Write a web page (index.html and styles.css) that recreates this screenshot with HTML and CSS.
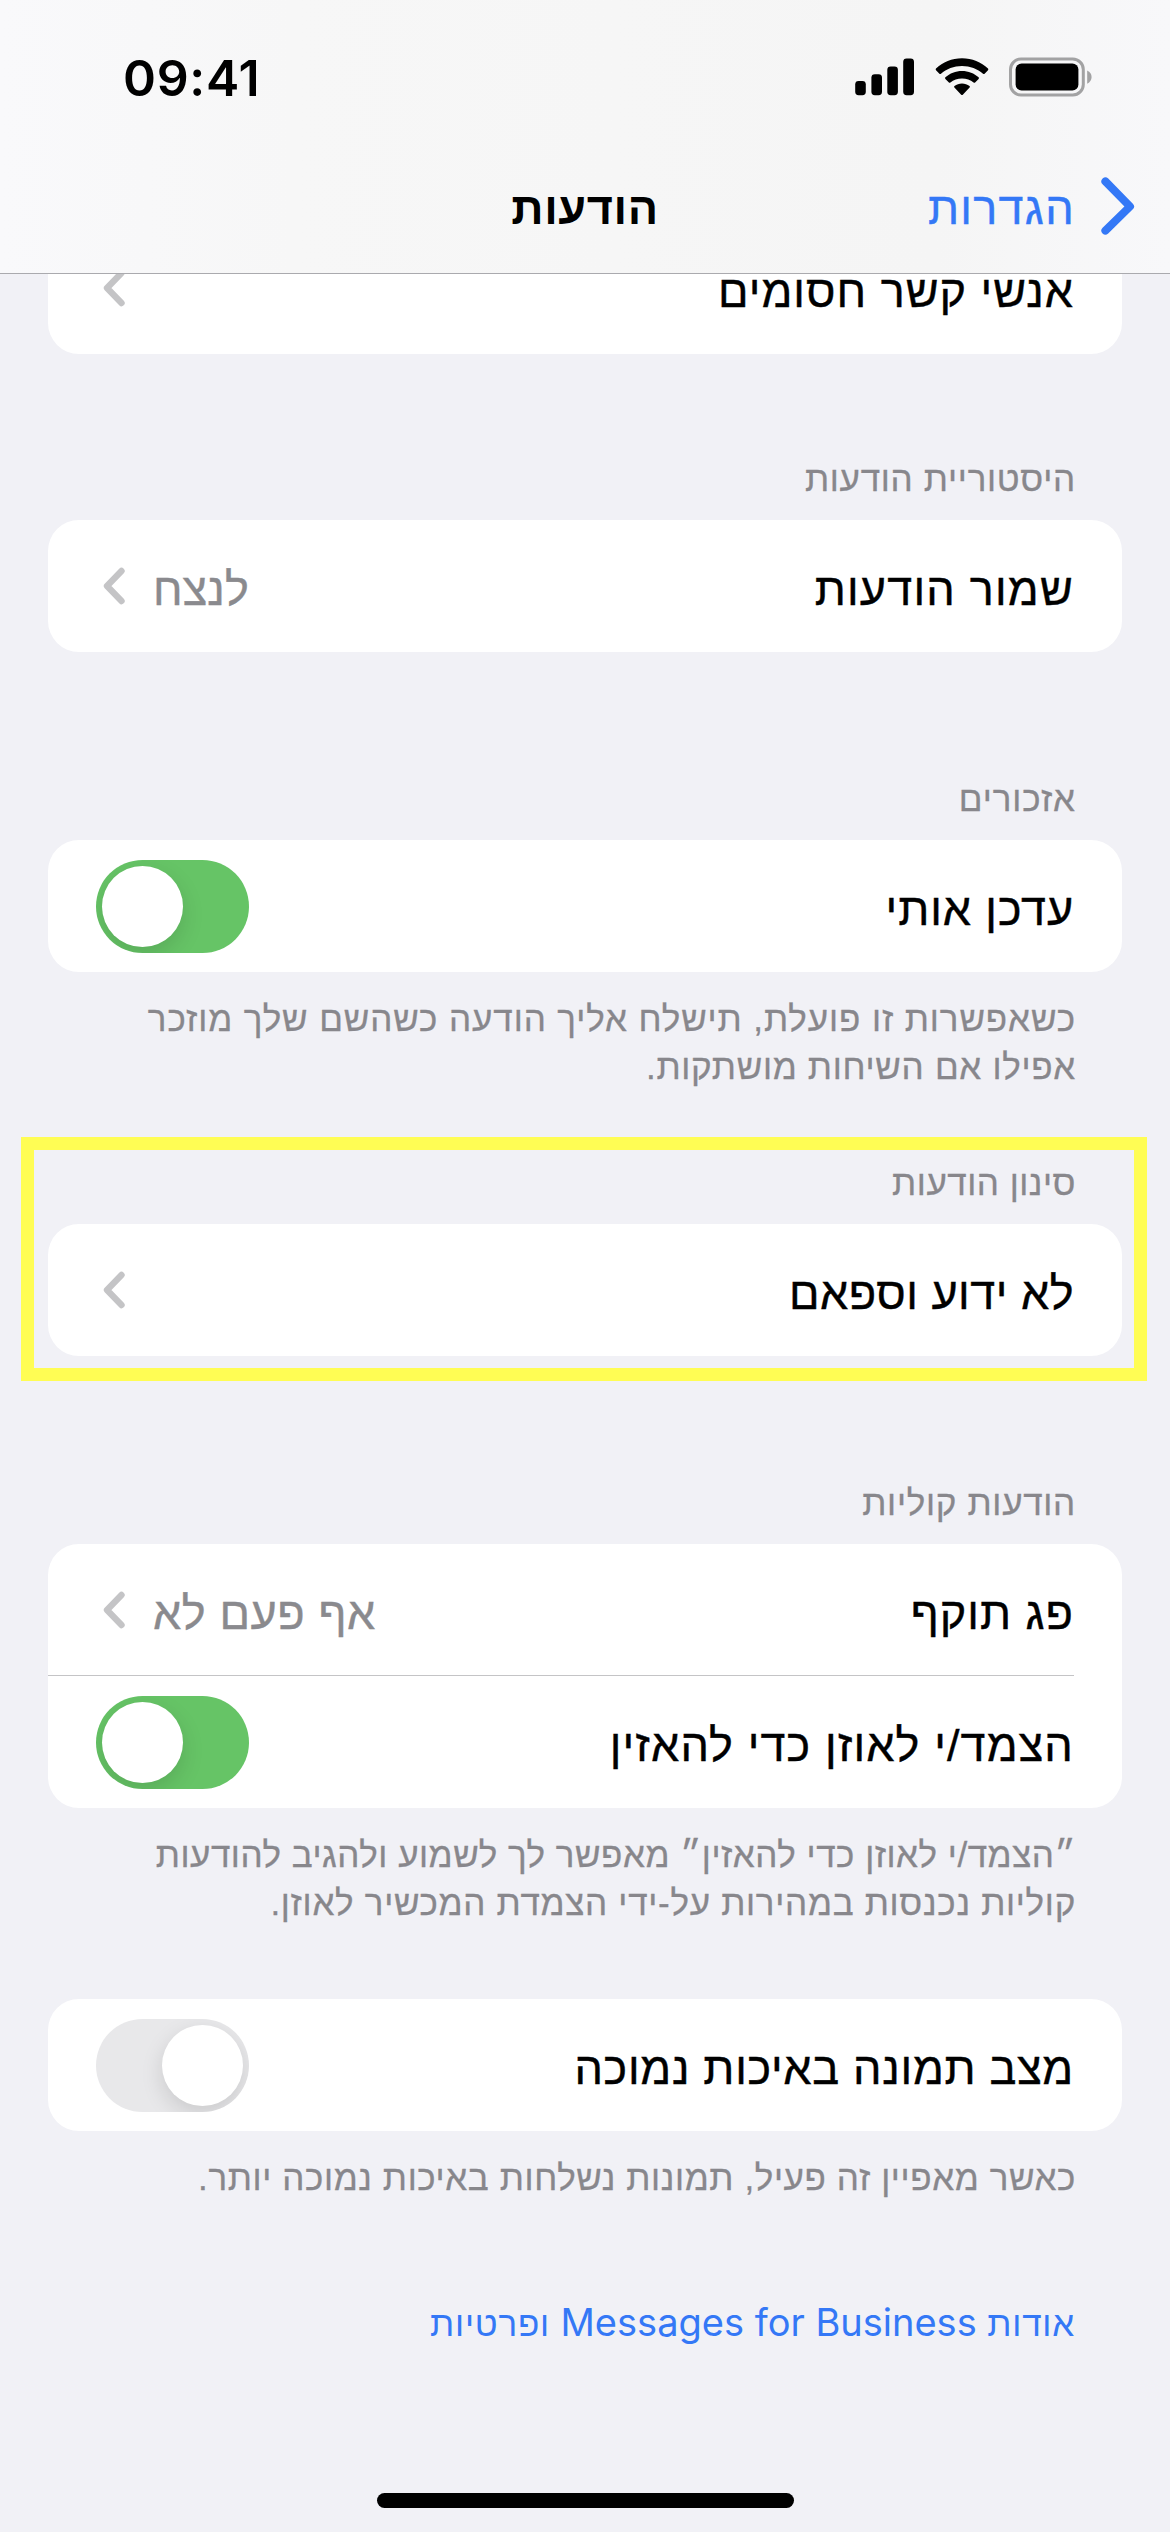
FILE: index.html
```html
<!DOCTYPE html>
<html lang="he" dir="rtl">
<head>
<meta charset="utf-8">
<title>הודעות</title>
<link rel="stylesheet" href="styles.css">
</head>
<body>
<div class="screen">
  <header class="header">
    <div class="status" dir="ltr">
      <span class="time">09:41</span>
      <span class="indicators">
        <svg class="signal" width="60" height="38" viewBox="0 0 60 38"><rect x="0.2" y="23" width="10.6" height="14.2" rx="3.4"/><rect x="16.4" y="16.2" width="10.6" height="21" rx="3.4"/><rect x="32.3" y="8.4" width="10.6" height="28.8" rx="3.4"/><rect x="48.2" y="0.6" width="10.8" height="36.6" rx="3.4"/></svg>
        <svg class="wifi" width="54" height="38" viewBox="0 0 54 38"><path d="M27 0.2C16.900 0.200 7.800 4.200 1 10.600Q0.300 11.400 1 12.200L4.400 15.700Q5.200 16.400 6 15.700C11.500 10.800 18.900 7.900 27 7.900S42.500 10.800 48 15.700Q48.800 16.400 49.600 15.700L53 12.200Q53.700 11.400 53 10.600C46.200 4.200 37.100 0.200 27 0.200Z"/><path d="M27 13C20.600 13 14.800 15.400 10.400 19.300Q9.600 20.100 10.400 20.900L13.900 24.500Q14.600 25.200 15.400 24.500C18.500 21.900 22.600 20.400 27 20.400S35.500 21.900 38.600 24.500Q39.400 25.200 40.100 24.500L43.600 20.900Q44.400 20.100 43.600 19.300C39.200 15.400 33.400 13 27 13Z"/><path d="M27 25.600C24.200 25.600 21.600 26.500 19.500 28Q18.600 28.800 19.400 29.600L26.200 36.700Q27 37.500 27.800 36.700L34.600 29.600Q35.400 28.800 34.500 28C32.400 26.500 29.800 25.600 27 25.600Z"/></svg>
        <svg class="battery" width="84" height="40" viewBox="0 0 84 40"><rect x="1.500" y="2" width="72.800" height="36" rx="10.500" fill="none" stroke="#a2a2a3" stroke-width="3"/><rect x="6.600" y="6.600" width="62.800" height="26.800" rx="6"/><path d="M78.200 13.400Q82.600 15.600 82.600 20T78.200 26.700Z" fill="#a2a2a3"/></svg>
      </span>
    </div>
    <nav class="nav">
      <a class="back"><svg width="36" height="60" viewBox="0 0 36 60"><path d="M5.400 5.400L30 30.500L5.400 54.600" fill="none" stroke="#3478f6" stroke-width="8" stroke-linecap="round" stroke-linejoin="round"/></svg><span class="back-label">הגדרות</span></a>
      <h1 class="title">הודעות</h1>
    </nav>
  </header>

  <main class="list">
    <section class="section first">
      <div class="card"><div class="row"><span class="label s10">אנשי קשר חסומים</span><svg class="chevron" viewBox="0 0 22 38"><path d="M18.500 4L4 19L18.500 34"/></svg></div></div>
    </section>

    <section class="section history">
      <h2 class="caption s07">היסטוריית הודעות</h2>
      <div class="card"><div class="row"><span class="label s12">שמור הודעות</span><span class="value s01">לנצח</span><svg class="chevron" viewBox="0 0 22 38"><path d="M18.500 4L4 19L18.500 34"/></svg></div></div>
    </section>

    <section class="section mentions">
      <h2 class="caption s09">אזכורים</h2>
      <div class="card"><div class="row"><span class="label s09">עדכן אותי</span><span class="toggle on"><i class="knob"></i></span></div></div>
      <p class="note"><span class="s09">כשאפשרות זו פועלת, תישלח אליך הודעה כשהשם שלך מוזכר</span><br><span class="s07">אפילו אם השיחות מושתקות.</span></p>
    </section>

    <section class="section filtering">
      <h2 class="caption s05">סינון הודעות</h2>
      <div class="card"><div class="row"><span class="label s05">לא ידוע וספאם</span><svg class="chevron" viewBox="0 0 22 38"><path d="M18.500 4L4 19L18.500 34"/></svg></div></div>
    </section>

    <section class="section audio">
      <h2 class="caption s07">הודעות קוליות</h2>
      <div class="card">
        <div class="row"><span class="label s10">פג תוקף</span><span class="value s06">אף פעם לא</span><svg class="chevron" viewBox="0 0 22 38"><path d="M18.500 4L4 19L18.500 34"/></svg></div>
        <div class="row"><span class="label s11">הצמד/י לאוזן כדי להאזין</span><span class="toggle on"><i class="knob"></i></span></div>
      </div>
      <p class="note"><span class="s05">״הצמד/י לאוזן כדי להאזין״ מאפשר לך לשמוע ולהגיב להודעות</span><br><span class="s07">קוליות נכנסות במהירות על-ידי הצמדת המכשיר לאוזן.</span></p>
    </section>

    <section class="section quality">
      <div class="card"><div class="row"><span class="label s07">מצב תמונה באיכות נמוכה</span><span class="toggle"><i class="knob"></i></span></div></div>
      <p class="note"><span class="s06">כאשר מאפיין זה פעיל, תמונות נשלחות באיכות נמוכה יותר.</span></p>
    </section>

    <a class="about">אודות <span class="latin">Messages for Business</span> ופרטיות</a>
  </main>
  <div class="home-bar"></div>
</div>
</body>
</html>
```
FILE: styles.css
```css
* { box-sizing: border-box; }

body {
  margin: 0;
  background: #f1f1f6;
  color: #000;
  font-family: "Liberation Sans", sans-serif;
}

.screen {
  position: relative;
  width: 1170px;
  height: 2532px;
  overflow: hidden;
  background: #f1f1f6;
}

/* Header */
.header {
  position: relative;
  z-index: 1;
  height: 274px;
  background: linear-gradient(90deg, #f9f9fb 0, #f7f7f7 25%, #f5f5f5 80%, #f8f8fa 100%);
  border-bottom: 1px solid #aaaaae;
}
.status {
  display: flex;
  justify-content: space-between;
  height: 150px;
  padding: 48px 77px 0 123px;
}
.time {
  font: 600 50px/60px Inter, sans-serif;
  letter-spacing: 0.7px;
}
.indicators {
  display: flex;
  gap: 20px;
  padding-top: 10px;
}
.battery { margin-top: -1px; }

.nav {
  display: grid;
  grid-template-columns: 1fr auto 1fr;
  height: 123px;
  padding: 0 34px;
}
.back {
  display: flex;
  gap: 25px;
  padding-top: 26px;
  color: #3478f6;
}
.back-label {
  font-size: 45px;
  line-height: 60px;
  letter-spacing: 1.3px;
  padding-top: 3px;
  -webkit-text-stroke: 0.4px;
}
.title {
  margin: 0;
  padding-top: 29px;
  font-size: 45px;
  line-height: 60px;
  letter-spacing: 0.6px;
}

/* Grouped list */
.list { padding: 0 48px; }
.first { margin-top: -52px; }
.history { margin-top: 100px; }
.mentions, .audio { margin-top: 122px; }
.filtering { margin-top: 67px; position: relative; }
.quality { margin-top: 72px; }

.filtering::after {
  content: "";
  position: absolute;
  inset: -21px -24.500px -25px -27px;
  border: 13.500px solid #fffd54;
}

.caption {
  margin: 0;
  padding: 0 46px 18px;
  font-size: 35px;
  font-weight: 400;
  line-height: 47px;
  padding-top: 1px;
  color: #88878c;
  -webkit-text-stroke: 0.3px;
}
.card {
  border-radius: 31px;
  background: #fff;
}
.row {
  position: relative;
  display: flex;
  align-items: center;
  height: 132px;
  padding: 0 48px;
  font-size: 45px;
}
.row + .row::before {
  content: "";
  position: absolute;
  top: -1px;
  right: 48px;
  left: 0;
  height: 1px;
  background: #c4c4c6;
}
.label, .value {
  padding-top: 7px;
  -webkit-text-stroke: 0.4px;
}
.label { flex: 1; }
.value { color: #8a8a8e; }
.chevron {
  width: 22px;
  height: 38px;
  margin: 0 28px 0 7px;
  fill: none;
  stroke: #c4c4c6;
  stroke-width: 6.400px;
  stroke-linecap: round;
  stroke-linejoin: round;
}
.toggle {
  display: flex;
  width: 153px;
  height: 93px;
  padding: 6px;
  border-radius: 47px;
  background: #e8e8ea;
  overflow: hidden;
}
.toggle.on {
  justify-content: flex-end;
  background: #66c466;
}
.knob {
  width: 81px;
  height: 81px;
  border-radius: 50%;
  background: #fff;
  box-shadow: 0 8px 22px rgba(0, 0, 0, 0.13);
}
.note {
  margin: 23px 0 0;
  padding: 0 46px;
  font-size: 35px;
  line-height: 48px;
  white-space: nowrap;
  color: #88878c;
  -webkit-text-stroke: 0.3px;
}
.about {
  display: block;
  margin-top: 96px;
  padding: 0 47px;
  font-size: 35px;
  line-height: 48px;
  letter-spacing: 0.8px;
  color: #3478f6;
}
.latin {
  font: 38px/48px Inter, sans-serif;
  letter-spacing: 0;
}
.home-bar {
  position: absolute;
  left: 377px;
  bottom: 24px;
  width: 417px;
  height: 15px;
  border-radius: 8px;
  background: #000;
}

/* Tracking steps */
.s01 { letter-spacing: 0.1px; }
.s05 { letter-spacing: 0.5px; }
.s06 { letter-spacing: 0.6px; }
.s07 { letter-spacing: 0.7px; }
.s09 { letter-spacing: 0.9px; }
.s10 { letter-spacing: 1px; }
.s11 { letter-spacing: 1.120px; }
.s12 { letter-spacing: 1.200px; }
```
